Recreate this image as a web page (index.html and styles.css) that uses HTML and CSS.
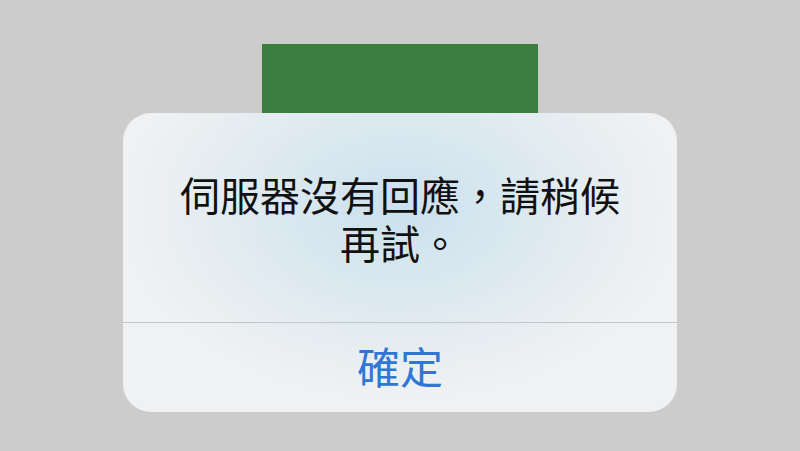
FILE: index.html
```html
<!DOCTYPE html>
<html lang="zh-Hant">
<head>
<meta charset="utf-8">
<link rel="stylesheet" href="styles.css">
</head>
<body>
<div class="stage">
  <div class="green"></div>
  <div class="dialog">
    <div class="message">伺服器沒有回應，請稍候<br>再試。</div>
    <div class="divider"></div>
    <div class="button">確定</div>
  </div>
</div>
</body>
</html>
```

FILE: styles.css
```css
html, body {
  margin: 0;
  padding: 0;
  background: #cccccc;
  width: 800px;
  height: 451px;
  overflow: hidden;
}
.stage {
  display: flex;
  flex-direction: column;
  align-items: center;
  padding-top: 44px;
  font-family: "Noto Sans CJK TC", "Noto Sans CJK SC", sans-serif;
}
.green {
  width: 276px;
  height: 69px;
  background: #3a7d3e;
}
.dialog {
  width: 554px;
  height: 299px;
  border-radius: 28px;
  background:
    radial-gradient(ellipse 280px 190px at 50% 32%, rgba(202,225,237,1) 0%, rgba(212,230,239,0.8) 40%, rgba(240,241,242,0) 100%),
    #f0f1f2;
  display: flex;
  flex-direction: column;
  overflow: hidden;
}
.message {
  height: 209px;
  box-sizing: border-box;
  padding-top: 57px;
  font-size: 40px;
  line-height: 48px;
  color: #111111;
  text-align: center;
}
.divider {
  height: 1px;
  background: #c4c6c9;
}
.button {
  flex: 1;
  display: flex;
  align-items: center;
  justify-content: center;
  padding-bottom: 6px;
  font-size: 43px;
  color: #3176d6;
}
```
